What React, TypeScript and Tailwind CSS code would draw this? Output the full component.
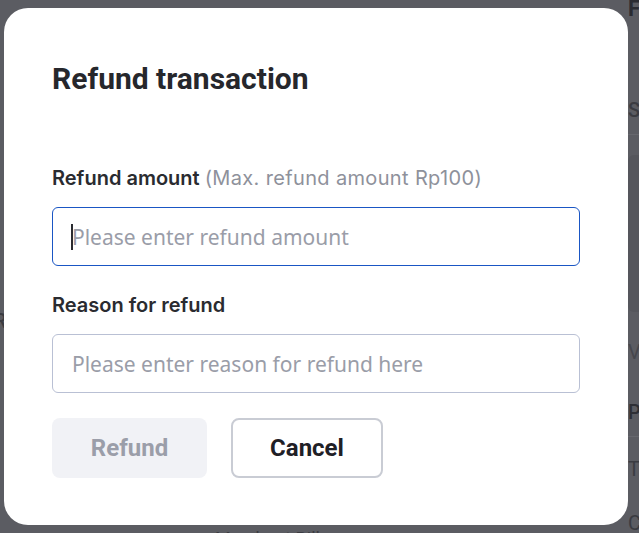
import React from 'react';

export default function App() {
  return (
    <div className="relative h-[533px] w-[639px] overflow-hidden bg-[#5b5c62] font-['Roboto',sans-serif]">
      {/* dimmed page behind the dialog */}
      <div className="flex h-full">
        <div className="w-[4px] flex-none" />
        <div className="flex-1" />
        <div className="flex w-[11px] flex-none flex-col text-[22px] font-bold leading-none text-[#2a2b31]">
          <span className="mt-[-2px]">F</span>
          <span className="mt-[80px] text-[20px] font-medium text-[#3a3b41]">S</span>
          <div className="mt-[14px] h-px bg-[#66676d]" />
          <div className="mt-[20px] h-[170px] rounded-l-md bg-[#55565c]" />
          <span className="mt-[30px] text-[20px] font-normal text-[#46474d]">V</span>
          <span className="mt-[40px] text-[20px] font-medium text-[#2e2f35]">P</span>
          <div className="mt-[14px] h-px bg-[#66676d]" />
          <span className="mt-[22px] text-[20px] font-normal text-[#3a3b41]">T</span>
          <span className="mt-[34px] text-[20px] font-normal text-[#3a3b41]">C</span>
        </div>
      </div>
      <span className="absolute left-[-6px] top-[306px] text-[20px] font-medium text-[#3a3b41]">R</span>
      <span className="absolute left-[215px] top-[525px] text-[18px] text-[#3a3b41]">Merchant Bill</span>

      {/* dialog */}
      <div className="absolute left-[4px] top-[8px] flex h-[517px] w-[624px] flex-col rounded-[24px] bg-white px-[48px] pt-[53px]">
        <h2 className="text-[30px] font-bold leading-[36px] text-[#26272c]">Refund transaction</h2>

        <label className="mt-[69px] font-['Inter',sans-serif] text-[20px] font-semibold leading-[24px] text-[#2a2b30]">
          Refund amount <span className="font-normal tracking-[0.35px] text-[#8e919b]">(Max. refund amount Rp100)</span>
        </label>
        <div className="relative mt-[17px]">
          <input
            className="h-[59px] w-full rounded-[6px] border border-[#1a56c4] px-[19px] font-['Noto_Sans',sans-serif] text-[21px] text-[#2a2b30] outline-none placeholder:text-[#9a9da8]"
            placeholder="Please enter refund amount"
          />
          <span className="absolute left-[19px] top-[17px] h-[26px] w-[2px] bg-[#2a2b30]" />
        </div>

        <label className="mt-[27px] font-['Inter',sans-serif] text-[20px] font-semibold leading-[24px] text-[#2a2b30]">
          Reason for refund
        </label>
        <input
          className="mt-[17px] h-[59px] w-full rounded-[6px] border border-[#b9c0d4] px-[19px] font-['Noto_Sans',sans-serif] text-[21px] text-[#2a2b30] outline-none placeholder:text-[#9a9da8]"
          placeholder="Please enter reason for refund here"
        />

        <div className="mt-[25px] flex gap-[24px]">
          <button className="h-[60px] w-[155px] rounded-[8px] bg-[#f1f2f6] text-[24px] font-bold text-[#9b9ea9]" disabled>
            Refund
          </button>
          <button className="h-[60px] w-[152px] rounded-[8px] border-2 border-[#c9ccd4] bg-white text-[24px] font-bold text-[#1f2026]">
            Cancel
          </button>
        </div>
      </div>
    </div>
  );
}
